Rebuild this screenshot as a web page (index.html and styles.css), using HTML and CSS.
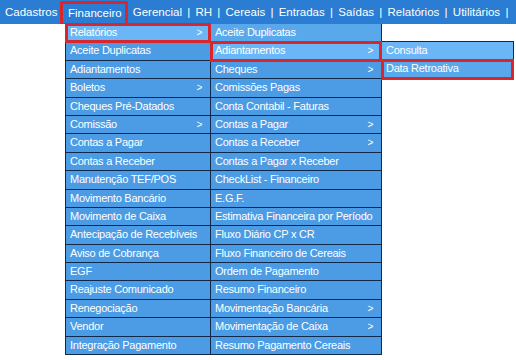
FILE: index.html
```html
<!DOCTYPE html>
<html>

<head>
    <title>Menu Financeiro</title>
    <link rel="stylesheet" href="styles.css">
</head>

<body>
    <div class="topbar">
        <nav class="menu">
            <a class="menu-item">Cadastros</a><span class="sep first-sep">|</span>
            <a class="menu-item marked">Financeiro</a>
            <a class="menu-item after-marked">Gerencial</a><span class="sep">|</span>
            <a class="menu-item">RH</a><span class="sep">|</span>
            <a class="menu-item">Cereais</a><span class="sep">|</span>
            <a class="menu-item">Entradas</a><span class="sep">|</span>
            <a class="menu-item">Saídas</a><span class="sep">|</span>
            <a class="menu-item">Relatórios</a><span class="sep">|</span>
            <a class="menu-item">Utilitários</a><span class="sep">|</span>
        </nav>
    </div>

    <div class="dropdown">
        <ul class="col col-1">
            <li class="active marked">Relatórios<span class="arrow">&gt;</span></li>
            <li>Aceite Duplicatas</li>
            <li>Adiantamentos</li>
            <li>Boletos<span class="arrow">&gt;</span></li>
            <li>Cheques Pré-Datados</li>
            <li>Comissão<span class="arrow">&gt;</span></li>
            <li>Contas a Pagar</li>
            <li>Contas a Receber</li>
            <li>Manutenção TEF/POS</li>
            <li>Movimento Bancário</li>
            <li>Movimento de Caixa</li>
            <li>Antecipação de Recebíveis</li>
            <li>Aviso de Cobrança</li>
            <li>EGF</li>
            <li>Reajuste Comunicado</li>
            <li>Renegociação</li>
            <li>Vendor</li>
            <li>Integração Pagamento</li>
        </ul>
        <ul class="col col-2">
            <li class="first">Aceite Duplicatas</li>
            <li class="active marked">Adiantamentos<span class="arrow">&gt;</span></li>
            <li>Cheques<span class="arrow">&gt;</span></li>
            <li>Comissões Pagas</li>
            <li>Conta Contabil - Faturas</li>
            <li>Contas a Pagar<span class="arrow">&gt;</span></li>
            <li>Contas a Receber<span class="arrow">&gt;</span></li>
            <li>Contas a Pagar x Receber</li>
            <li>CheckList - Financeiro</li>
            <li>E.G.F.</li>
            <li>Estimativa Financeira por Período</li>
            <li>Fluxo Diário CP x CR</li>
            <li>Fluxo Financeiro de Cereais</li>
            <li>Ordem de Pagamento</li>
            <li>Resumo Financeiro</li>
            <li>Movimentação Bancária<span class="arrow">&gt;</span></li>
            <li>Movimentação de Caixa<span class="arrow">&gt;</span></li>
            <li>Resumo Pagamento Cereais</li>
        </ul>
        <ul class="col col-3">
            <li class="active">Consulta</li>
            <li class="first marked">Data Retroativa</li>
        </ul>
    </div>
</body>

</html>
```

FILE: styles.css
```css
body {
    font-family: "Liberation Sans", Arial, sans-serif;
    font-size: 11px;
    letter-spacing: -0.25px;
    margin: 0;
    background-color: #ffffff;
    color: #ffffff;
}

.topbar {
    background-color: #2a7dd2;
    height: 24px;
}

.menu {
    display: flex;
    height: 23px;
    line-height: 23px;
    padding: 1px 0 0 5px;
    font-size: 11.5px;
    letter-spacing: 0;
}

.sep {
    margin: 0 5.25px;
}

.sep.first-sep {
    margin: 0 0 0 3px;
}

.marked {
    outline: 3px solid #d8262d;
    outline-offset: -2px;
}

.menu-item.marked {
    margin: 2px 0 -2px -1px;
    padding: 0 4px 0 5.6px;
    line-height: 20px;
    height: 21px;
    outline-offset: -1px;
}

.menu-item.after-marked {
    margin-left: 7px;
}

.dropdown {
    position: absolute;
    left: 65px;
    top: 24px;
    display: flex;
    align-items: flex-start;
}

.col {
    list-style: none;
    margin: 0;
    padding: 0;
    border: 1px solid #10294a;
    border-bottom: none;
    background-color: #4b9be5;
}

.col-1 {
    width: 144px;
    border-top: none;
}

.col-2 {
    width: 170px;
    border-left: none;
    border-top: none;
}

.col-3 {
    width: 131px;
    border-left: none;
    margin-top: 17px;
}

.col li {
    display: flex;
    justify-content: space-between;
    height: 17.4px;
    line-height: 17px;
    padding: 0 8px 0 4px;
    border-bottom: 1px solid #10294a;
    white-space: nowrap;
}

.col li.first {
    background-color: #5aa8ec;
}

.col li.active {
    background-color: #6ab6f6;
}

.arrow {
    font-size: 10px;
}
```
